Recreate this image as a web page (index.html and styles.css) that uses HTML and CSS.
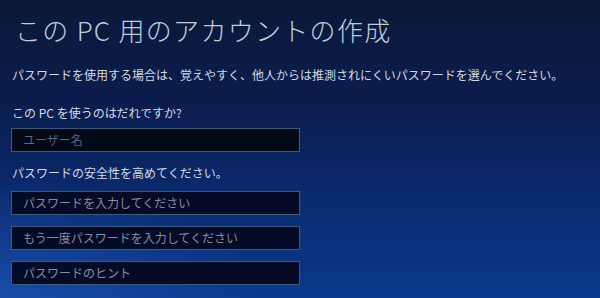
FILE: index.html
```html
<!DOCTYPE html>
<html lang="ja">
<head>
<meta charset="utf-8">
<title>この PC 用のアカウントの作成</title>
<link rel="stylesheet" href="styles.css">
</head>
<body>
<div class="page">
  <h1 class="title">この PC 用のアカウントの作成</h1>
  <p class="intro">パスワードを使用する場合は、覚えやすく、他人からは推測されにくいパスワードを選んでください。</p>
  <div class="label label-user">この PC を使うのはだれですか?</div>
  <div class="field field-user"><span class="ph ph-user">ユーザー名</span></div>
  <div class="label label-pw">パスワードの安全性を高めてください。</div>
  <div class="fields">
    <div class="field"><span class="ph">パスワードを入力してください</span></div>
    <div class="field"><span class="ph">もう一度パスワードを入力してください</span></div>
    <div class="field"><span class="ph">パスワードのヒント</span></div>
  </div>
</div>
</body>
</html>
```
FILE: styles.css
```css
html, body {
  margin: 0;
  padding: 0;
  width: 600px;
  height: 298px;
  overflow: hidden;
}
body {
  font-family: "Noto Sans CJK JP", "Noto Sans", sans-serif;
  color: #d6dce6;
  background:
    radial-gradient(ellipse 260px 120px at 0% 100%, rgba(40, 100, 200, 0.45), rgba(40, 100, 200, 0) 100%),
    linear-gradient(180deg, #0a1838 0%, #0b1d4e 35%, #0a2a6e 65%, #0a3a8c 100%);
}
.page {
  display: flex;
  flex-direction: column;
  align-items: flex-start;
  padding: 14px 0 0 12px;
}
.title {
  margin: 0 0 0 3px;
  font-size: 26px;
  line-height: 32px;
  font-weight: 300;
  color: #bfcddb;
  letter-spacing: 1.3px;
}
.intro {
  margin: 21px 0 0 0;
  font-size: 12px;
  line-height: 16px;
  color: #d4d9e2;
}
.label {
  font-size: 12px;
  line-height: 16px;
  color: #d4d9e2;
}
.label-user {
  margin-top: 22px;
}
.label-pw {
  margin-top: 13px;
}
.field {
  box-sizing: border-box;
  width: 289px;
  height: 24px;
  margin-left: -1px;
  border: 1px solid #3d5a7e;
  background: #050b26;
  display: flex;
  align-items: center;
  padding-left: 11px;
}
.field-user {
  margin-top: 7px;
  background: #030916;
}
.fields {
  margin-top: 10px;
  display: flex;
  flex-direction: column;
  gap: 11px;
}
.ph {
  font-size: 12px;
  line-height: 16px;
  color: #848ea0;
}
.ph-user {
  color: #52678a;
}
```
